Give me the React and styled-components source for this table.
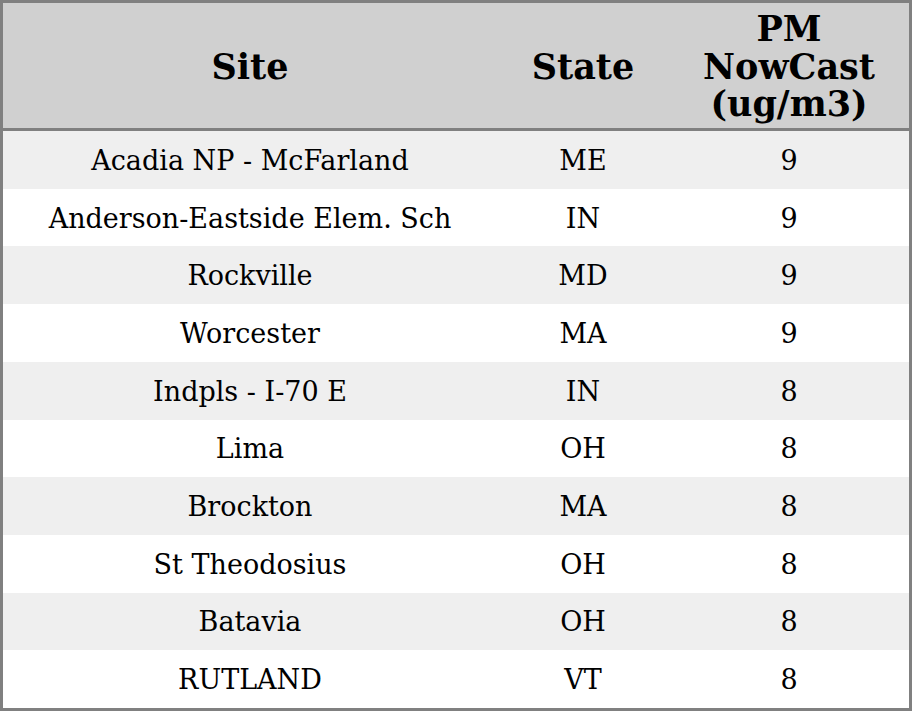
import React from "react";
import styled, { createGlobalStyle } from "styled-components";

const Global = createGlobalStyle`
  html, body { margin: 0; padding: 0; background: #ffffff; }
  * { box-sizing: border-box; }
`;

const Table = styled.div`
  width: 912px;
  height: 711px;
  border: 3px solid #808080;
  display: grid;
  grid-template-rows: 125px 3px repeat(10, 1fr);
  font-family: "DejaVu Serif", serif;
  color: #000;
`;

const Row = styled.div`
  display: grid;
  grid-template-columns: 494px 172px 240px;
  align-items: center;
  background: ${(p) => p.$bg};
`;

const HeadCell = styled.div`
  text-align: center;
  font-weight: bold;
  font-size: 35px;
  line-height: 37.5px;
  padding-top: 2px;
`;

const Divider = styled.div`
  background: #808080;
`;

const Cell = styled.div`
  text-align: center;
  font-size: 27px;
  line-height: 30px;
  padding-top: 2px;
`;

const data = [
  ["Acadia NP - McFarland", "ME", "9"],
  ["Anderson-Eastside Elem. Sch", "IN", "9"],
  ["Rockville", "MD", "9"],
  ["Worcester", "MA", "9"],
  ["Indpls - I-70 E", "IN", "8"],
  ["Lima", "OH", "8"],
  ["Brockton", "MA", "8"],
  ["St Theodosius", "OH", "8"],
  ["Batavia", "OH", "8"],
  ["RUTLAND", "VT", "8"],
];

export default function App() {
  return (
    <>
      <Global />
      <Table>
        <Row $bg="#d0d0d0">
          <HeadCell>Site</HeadCell>
          <HeadCell>State</HeadCell>
          <HeadCell>
            PM
            <br />
            NowCast
            <br />
            (ug/m3)
          </HeadCell>
        </Row>
        <Divider />
        {data.map((r, i) => (
          <Row key={i} $bg={i % 2 === 0 ? "#efefef" : "#ffffff"}>
            <Cell>{r[0]}</Cell>
            <Cell>{r[1]}</Cell>
            <Cell>{r[2]}</Cell>
          </Row>
        ))}
      </Table>
    </>
  );
}
